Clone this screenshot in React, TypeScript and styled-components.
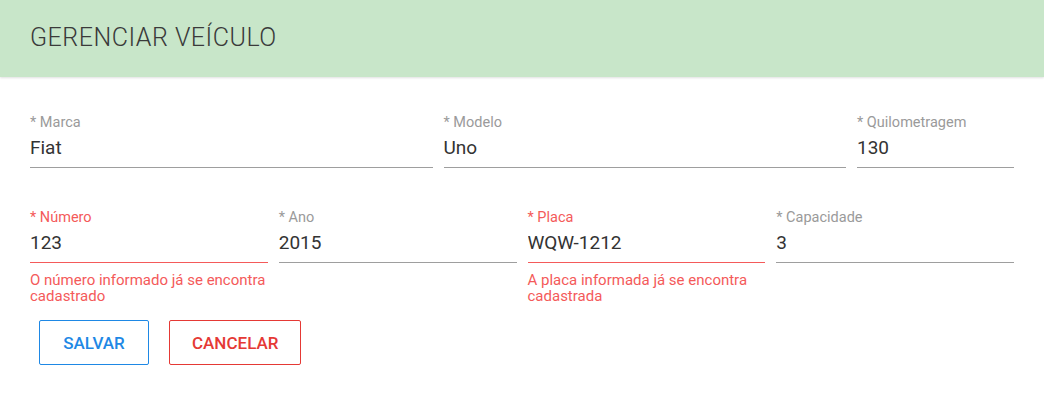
import React from "react";
import styled, { createGlobalStyle } from "styled-components";

const GlobalStyle = createGlobalStyle`
  html, body {
    margin: 0;
    padding: 0;
    background: #ffffff;
    font-family: Roboto, "Noto Sans", Arial, sans-serif;
  }
  * { box-sizing: border-box; }
`;

const ERROR = "#f45a5a";
const MUTED = "#9a9a9a";
const LINE = "#9e9e9e";

const Page = styled.div`
  width: 1044px;
  min-height: 400px;
  background: #ffffff;
`;

const Header = styled.header`
  height: 77px;
  padding: 0 30px 2px;
  display: flex;
  align-items: center;
  background: #c8e6c9;
  box-shadow: 0 1px 2px rgba(0, 0, 0, 0.12);
`;

const Title = styled.h1`
  margin: 0;
  font-family: "Roboto Light", Roboto, "Noto Sans", Arial, sans-serif;
  font-size: 25px;
  font-weight: 300;
  color: #3a3a3a;
  letter-spacing: 0.5px;
`;

const Form = styled.form`
  padding: 38px 30px 0;
  display: flex;
  flex-direction: column;
`;

const Row = styled.div<{ $columns: string; $mb: number }>`
  display: grid;
  grid-template-columns: ${(p) => p.$columns};
  column-gap: 11px;
  margin-bottom: ${(p) => p.$mb}px;
  align-items: start;
`;

const Field = styled.div`
  display: flex;
  flex-direction: column;
`;

const Label = styled.label<{ $color: string }>`
  font-size: 14.5px;
  line-height: 16px;
  color: ${(p) => p.$color};
  margin-bottom: 5px;
`;

const Input = styled.input<{ $line: string }>`
  box-sizing: content-box;
  width: 100%;
  height: 23px;
  margin: 0;
  padding: 0 0 8px;
  border: none;
  border-bottom: 1px solid ${(p) => p.$line};
  outline: none;
  background: transparent;
  font-family: Roboto, "Noto Sans", Arial, sans-serif;
  font-size: 19px;
  color: #333333;
`;

const ErrorText = styled.div`
  margin-top: 9px;
  font-size: 15px;
  line-height: 16px;
  color: ${ERROR};
`;

const Actions = styled.div`
  display: flex;
  gap: 20px;
  padding-left: 9px;
`;

const Button = styled.button<{ $color: string }>`
  height: 45px;
  min-width: 110px;
  padding: 0 22px;
  border: 1px solid ${(p) => p.$color};
  border-radius: 2px;
  background: #ffffff;
  color: ${(p) => p.$color};
  font-family: Roboto, "Noto Sans", Arial, sans-serif;
  font-size: 17px;
  font-weight: 500;
  text-transform: uppercase;
  cursor: pointer;
`;

type FieldDef = { label: string; value: string; error?: string };

const row1: FieldDef[] = [
  { label: "Marca", value: "Fiat" },
  { label: "Modelo", value: "Uno" },
  { label: "Quilometragem", value: "130" },
];

const row2: FieldDef[] = [
  { label: "Número", value: "123", error: "O número informado já se encontra cadastrado" },
  { label: "Ano", value: "2015" },
  { label: "Placa", value: "WQW-1212", error: "A placa informada já se encontra cadastrada" },
  { label: "Capacidade", value: "3" },
];

function FormField({ label, value, error }: FieldDef) {
  return (
    <Field>
      <Label $color={error ? ERROR : MUTED}>* {label}</Label>
      <Input $line={error ? ERROR : LINE} defaultValue={value} />
      {error && <ErrorText>{error}</ErrorText>}
    </Field>
  );
}

export default function App() {
  return (
    <Page>
      <GlobalStyle />
      <Header>
        <Title>GERENCIAR VEÍCULO</Title>
      </Header>
      <Form onSubmit={(e) => e.preventDefault()}>
        <Row $columns="1fr 1fr 157px" $mb={42}>
          {row1.map((f) => (
            <FormField key={f.label} {...f} />
          ))}
        </Row>
        <Row $columns="repeat(4, 1fr)" $mb={16}>
          {row2.map((f) => (
            <FormField key={f.label} {...f} />
          ))}
        </Row>
        <Actions>
          <Button type="button" $color="#1e88e5">Salvar</Button>
          <Button type="button" $color="#e53935">Cancelar</Button>
        </Actions>
      </Form>
    </Page>
  );
}
